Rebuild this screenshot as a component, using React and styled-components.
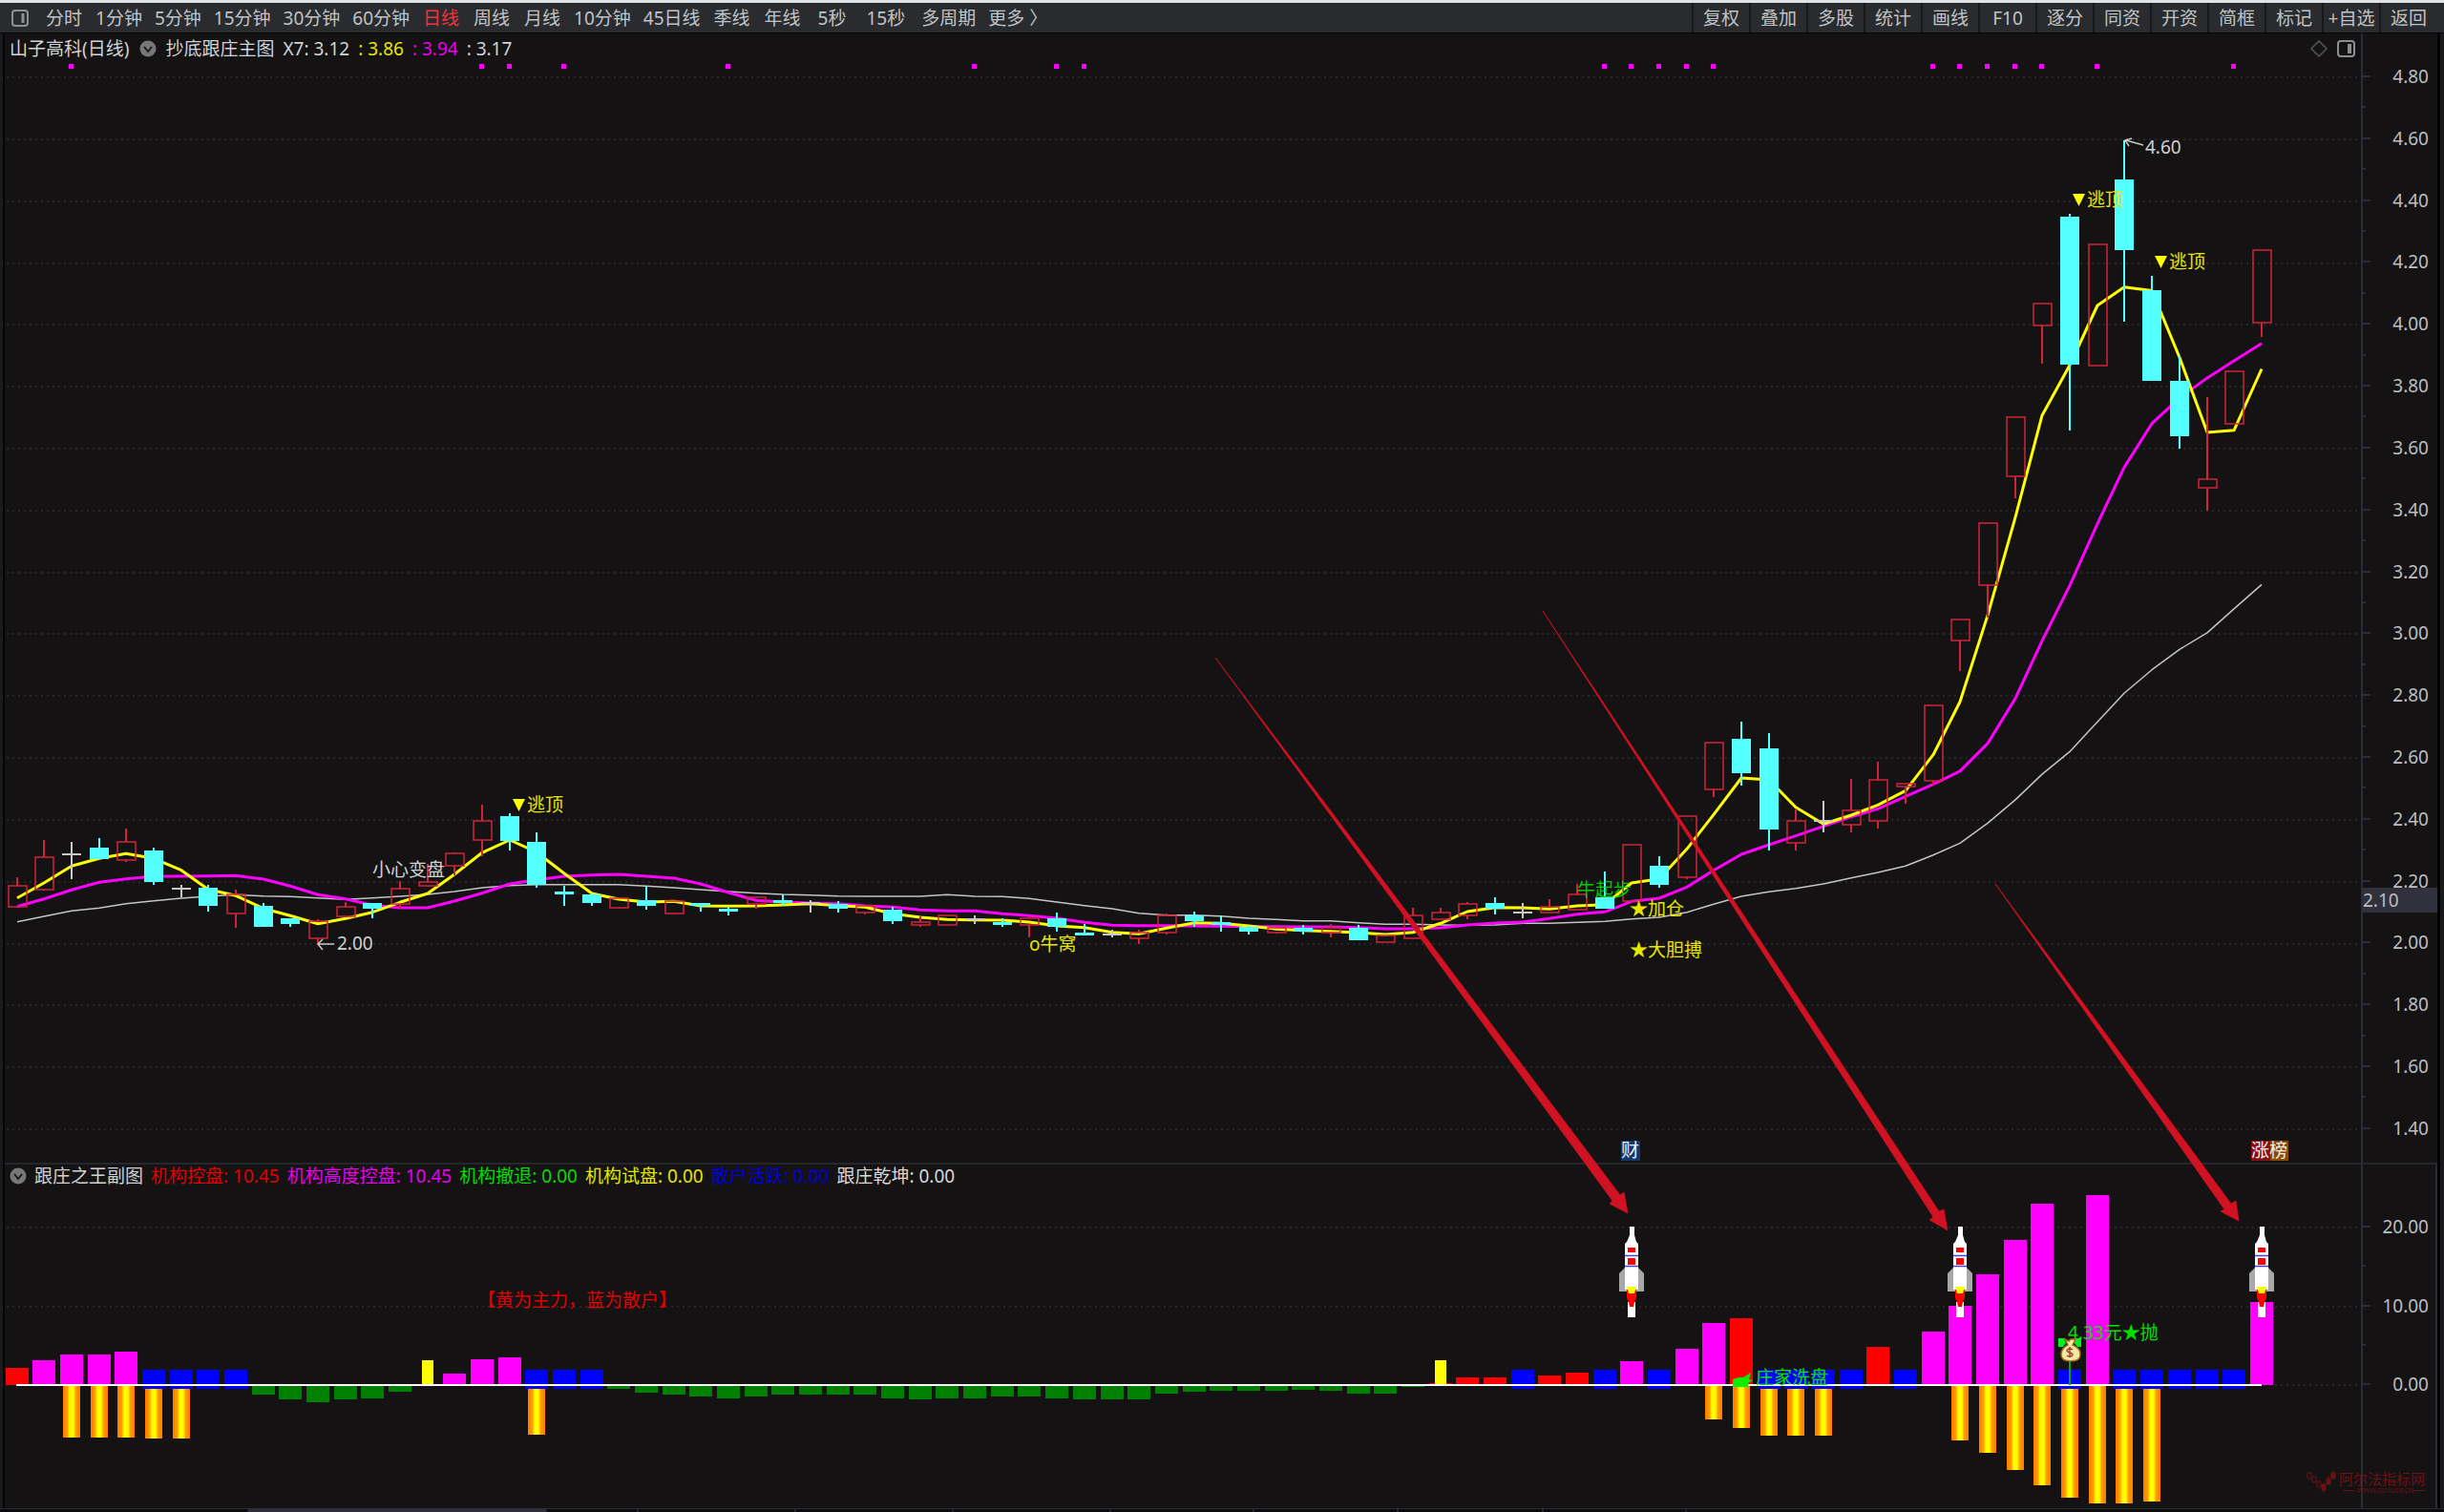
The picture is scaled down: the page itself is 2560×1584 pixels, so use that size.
import React from "react";
import styled, { createGlobalStyle } from "styled-components";

const GlobalStyle = createGlobalStyle`
  *, *::before, *::after { box-sizing: border-box; }
  body {
    margin: 0;
    background: #141213;
    font-family: "Noto Sans", "Noto Sans CJK SC", sans-serif;
    font-size: 19px;
    line-height: 24px;
    color: #c4c6c8;
  }
  button { font: inherit; color: inherit; background: none; border: 0; padding: 0; }
`;

const Shell = styled.div`
  display: flex;
  flex-direction: column;
`;

const TopBar = styled.header`
  display: flex;
  justify-content: space-between;
  height: 35px;
  padding-right: 8px;
  border-top: 3px solid #dfe5e5;
  border-bottom: 1px solid #050505;
  background: #292b2e;
`;

const Periods = styled.nav`
  display: flex;
  align-items: center;
  gap: 13px;
  padding-left: 12px;
`;

const periodPadding = { short: "0 1px", seconds: "0 4px", regular: "0" };

const PeriodButton = styled.button`
  padding: ${(p) => periodPadding[p.$kind]};
  color: ${(p) => (p.$active ? "#f0343a" : "#c0c3c5")};
  white-space: nowrap;
`;

const IconButton = styled.button`
  display: inline-flex;
  align-items: center;
  justify-content: center;
  margin: ${(p) => p.$margin || "0"};
`;

const Tools = styled.div`
  display: flex;
`;

const ToolButton = styled.button`
  width: 60px;
  border-left: 2px solid #17181a;
  color: #c0c3c5;
  text-align: center;
  white-space: nowrap;
`;

const Body = styled.main`
  display: grid;
  grid-template-columns: 5px 1fr 7px;
`;

const LeftRail = styled.div`
  background: #1a1b1e;
  border-right: 2px solid #060606;
`;

const RightRail = styled.div`
  background: #18191c;
  border-left: 3px solid #000;
`;

const Charts = styled.div`
  position: relative;
`;

const Panel = styled.section`
  display: grid;
  grid-template-columns: 1fr 80px;
  border-top: ${(p) => (p.$divided ? "2px solid #25272d" : "0")};
`;

const Plot = styled.div`
  min-width: 0;
`;

const InfoRow = styled.div`
  display: flex;
  align-items: center;
  justify-content: space-between;
  height: ${(p) => (p.$tall ? "32px" : "24px")};
  padding-right: 6px;
`;

const InfoItems = styled.div`
  display: flex;
  align-items: center;
  gap: ${(p) => p.$gap};
  padding-left: 5px;
`;

const InfoText = styled.span`
  color: ${(p) => p.$color || "#d0d2d4"};
  white-space: nowrap;
`;

const Drawing = styled.svg`
  display: block;
  width: 100%;
  height: auto;
  font-family: "Noto Sans", "Noto Sans CJK SC", sans-serif;
  font-size: 19px;
`;

const Overlay = styled(Drawing)`
  position: absolute;
  inset: 0;
  pointer-events: none;
`;

const Axis = styled.ol`
  position: relative;
  display: flex;
  flex-direction: column;
  justify-content: space-between;
  margin: 0;
  padding: ${(p) => p.$padding};
  list-style: none;
  border: solid #2a2d38;
  border-width: ${(p) => (p.$boxed ? "0 2px 0 2px" : "0 0 0 2px")};
  color: #bcbec0;
`;

const Tick = styled.li`
  display: flex;
  align-items: center;
  justify-content: space-between;
  height: ${(p) => (p.$minor ? "2px" : "24px")};
  padding-right: ${(p) => (p.$boxed ? "7px" : "9px")};
  &::before {
    content: "";
    width: ${(p) => (p.$minor ? "3px" : "8px")};
    height: 2px;
    background: #2a2d38;
  }
`;

const PriceTag = styled.li`
  position: absolute;
  left: 0;
  right: 0;
  height: 26px;
  line-height: 26px;
  transform: translateY(-100%);
  background: #30313c;
`;

const TabStrip = styled.footer`
  display: flex;
  height: 4px;
  padding-left: 5px;
  overflow: hidden;
  border-top: 1px solid #2a2d36;
  background: #0d0a0c;
`;

const Tab = styled.div`
  width: ${(p) => p.$width}px;
  flex: none;
  border-right: 2px solid #24262d;
  background: ${(p) => (p.$active ? "#2c2e38" : "transparent")};
`;

const X0 = 17.5;
const STEP = 28.675;
const x = (i) => Math.round(X0 + i * STEP);
const priceY = (p) => 145.9 + (4.6 - p) * 324.1;

// Each batch of readings has its own origin and scale: [y0, k] gives y = y0 + value / k.
const A = [800, 3];
const B = [880, 3];
const C = [700, 3];
const D = [120, 2.24];
const toY = ([y0, k], v) => y0 + v / k;

// R rising, C falling, D unchanged: [kind, high, body top, body bottom, low]
const candleGroups = [
  [A, [
    ["R", 358, 383, 451, 451], ["R", 240, 293, 395, 400], ["D", 245, 285, 285, 362], ["C", 235, 264, 299, 299],
    ["R", 203, 246, 304, 310], ["C", 263, 273, 371, 380], ["D", 381, 394, 394, 421], ["C", 382, 391, 447, 466],
    ["R", 396, 412, 470, 515], ["C", 439, 448, 514, 514], ["C", 486, 486, 504, 514], ["R", 490, 496, 550, 566],
    ["R", 434, 450, 480, 480], ["C", 438, 438, 457, 486], ["R", 368, 392, 441, 455], ["R", 316, 373, 384, 388],
    ["R", 278, 283, 322, 350], ["R", 130, 180, 239, 292], ["C", 155, 164, 244, 272], ["C", 215, 245, 380, 391],
    ["C", 384, 401, 408, 448], ["C", 408, 410, 437, 447], ["R", 422, 422, 452, 457], ["C", 384, 430, 446, 458],
    ["R", 431, 431, 470, 475], ["C", 438, 439, 447, 466], ["C", 450, 457, 466, 476], ["R", 416, 420, 441, 455],
    ["C", 410, 430, 436, 447], ["D", 430, 437, 437, 467],
  ]],
  [B, [
    ["C", 193, 200, 216, 227], ["R", 207, 207, 229, 233], ["C", 211, 218, 255, 263], ["R", 240, 257, 268, 272],
    ["R", 238, 238, 268, 268], ["D", 237, 250, 250, 263], ["C", 245, 257, 263, 273], ["R", 240, 246, 266, 306],
    ["C", 228, 246, 273, 287], ["C", 263, 290, 297, 297], ["D", 283, 298, 298, 305], ["R", 282, 291, 310, 326],
    ["R", 232, 238, 291, 296], ["C", 226, 236, 254, 272], ["C", 237, 258, 264, 287], ["C", 271, 274, 289, 297],
    ["R", 275, 275, 291, 295], ["C", 268, 276, 289, 297], ["R", 264, 276, 291, 305], ["C", 266, 276, 316, 316],
    ["R", 300, 300, 320, 320], ["R", 213, 238, 310, 310], ["R", 213, 229, 248, 248], ["R", 196, 200, 238, 250],
    ["C", 180, 198, 215, 234], ["D", 199, 229, 229, 246], ["R", 185, 210, 229, 229], ["R", 138, 172, 220, 220],
    ["C", 100, 180, 216, 216],
  ]],
  [C, [
    ["R", 556, 556, 732, 732], ["C", 592, 621, 682, 690], ["R", 466, 466, 656, 662], ["R", 235, 235, 382, 406],
    ["C", 167, 223, 331, 369], ["C", 205, 251, 507, 572], ["R", 440, 481, 548, 572], ["D", 417, 481, 481, 515],
    ["R", 347, 447, 491, 515], ["R", 294, 352, 481, 505], ["R", 362, 362, 373, 425], ["R", 116, 116, 353, 370],
  ]],
  [D, [
    ["R", 1185, 1185, 1234, 1305], ["R", 958, 958, 1105, 1180], ["R", 711, 711, 850, 900], ["R", 443, 443, 496, 585],
    ["C", 233, 240, 586, 741], ["R", 305, 305, 588, 588], ["C", 60, 152, 317, 487], ["C", 378, 413, 625, 625],
    ["C", 567, 626, 755, 783], ["R", 664, 856, 875, 929], ["R", 602, 602, 726, 726], ["R", 319, 319, 489, 522],
  ]],
];
const candles = candleGroups.flatMap(([o, rows]) =>
  rows.map(([kind, ...v]) => [kind, ...v.map((n) => Math.round(toY(o, n)))])
);

const flatten = (groups) => groups.flatMap(([o, vs]) => vs.map((v) => toY(o, v)));
const fast = flatten([
  [A, [422, 375, 322, 298, 283, 298, 335, 395, 415, 455, 478, 503, 487, 467, 436, 408, 348, 280, 240, 278, 345, 408, 426, 435, 433, 447, 448, 447, 444, 440]],
  [B, [206, 211, 232, 243, 250, 251, 252, 258, 270, 275, 290, 295, 277, 260, 262, 270, 280, 284, 287, 291, 297, 290, 262, 225, 212, 213, 217, 207, 203]],
  [C, [675, 662, 568, 460, 345, 351, 437, 490, 462, 430, 385, 272]],
  [D, [1378, 1175, 945, 706, 588, 448, 405, 413, 570, 746, 741, 597]],
]);
const mid = flatten([
  [A, [449, 425, 397, 373, 362, 354, 354, 353, 352, 363, 385, 412, 425, 445, 453, 453, 432, 407, 378, 365, 354, 350, 348, 354, 360, 378, 405, 430, 435, 438]],
  [B, [200, 207, 211, 220, 223, 223, 232, 238, 246, 259, 268, 269, 269, 270, 271, 272, 272, 273, 273, 275, 279, 279, 276, 267, 261, 258, 247, 233, 226]],
  [C, [733, 723, 688, 635, 585, 555, 527, 497, 467, 442, 403, 365]],
  [D, [1541, 1476, 1370, 1235, 1105, 960, 828, 725, 665, 618, 578, 537]],
]);
const slow = flatten([
  [A, [497, 480, 463, 454, 440, 431, 423, 417, 412, 416, 418, 422, 427, 422, 417, 411, 402, 390, 383, 380, 380, 380, 380, 385, 390, 396, 402, 407, 411, 413]],
  [B, [176, 177, 177, 177, 172, 177, 178, 184, 195, 206, 216, 230, 236, 236, 239, 246, 250, 254, 254, 260, 265, 265, 267, 268, 267, 262, 262, 259, 256]],
  [C, [788, 783, 767, 742, 717, 703, 692, 678, 659, 642, 622, 587]],
  [D, [1710, 1663, 1608, 1548, 1495, 1425, 1358, 1303, 1255, 1216, 1160, 1103]],
]);
const pts = (ys) => ys.map((y, i) => `${x(i)},${y.toFixed(1)}`).join(" ");

const signalDots = [2, 17, 18, 20, 26, 35, 38, 39, 58, 59, 60, 61, 62, 70, 71, 72, 73, 74, 76, 81];

const RED = "#ff0000";
const PINK = "#ff00ff";
const BLUE = "#0000ff";
const GREEN = "#008000";
const ZERO = 1451;

// [index, colour, height above the zero line]
const upBars = [
  [0, RED, 18], [1, PINK, 26], [2, PINK, 32], [3, PINK, 32], [4, PINK, 35],
  [16, PINK, 12], [17, PINK, 27], [18, PINK, 29], [52, RED, 2], [53, RED, 8], [54, RED, 8], [56, RED, 10],
  [57, RED, 13], [59, PINK, 25], [61, PINK, 38], [62, PINK, 65], [63, RED, 70], [68, RED, 40],
  [70, PINK, 56], [71, PINK, 83], [72, PINK, 116], [73, PINK, 152], [74, PINK, 190], [76, PINK, 199], [82, PINK, 87],
];
const blueBars = [5, 6, 7, 8, 19, 20, 21, 55, 58, 60, 64, 65, 66, 67, 69, 75, 77, 78, 79, 80, 81];
const greenStart = 22;
const greenDepths = [4, 8, 10, 12, 14, 12, 10, 10, 10, 10, 14, 15, 14, 14, 12, 12, 14, 15, 15, 15, 9, 7, 6, 6, 6, 5, 6, 9, 9, 2];
const greenBars = [[9, 10], [10, 15], [11, 18], [12, 15], [13, 14], [14, 7], ...greenDepths.map((d, k) => [greenStart + k, d])];
const goldBars = [
  [2, 1506], [3, 1506], [4, 1506], [5, 1507], [6, 1507], [19, 1503], [62, 1487], [63, 1496], [64, 1504], [65, 1504],
  [66, 1504], [71, 1509], [72, 1522], [73, 1540], [74, 1556], [75, 1569], [76, 1575], [77, 1575], [78, 1573],
];

const Candle = ({ i, data: [kind, hi, top, bottom, lo] }) => {
  const cx = x(i);
  if (kind === "D")
    return <path d={`M${cx} ${hi}V${lo}M${cx - 10} ${top}H${cx + 10}`} stroke="#c8c8c8" strokeWidth="2" />;
  const color = kind === "R" ? "#d0243c" : "#54ffff";
  return (
    <g>
      <path d={`M${cx} ${hi}V${top}M${cx} ${bottom}V${lo}`} stroke={color} strokeWidth="2" />
      {kind === "R" ? (
        <rect x={cx - 9} y={top} width="19" height={Math.max(bottom - top, 3)} fill="none" stroke={color} strokeWidth="1.5" />
      ) : (
        <rect x={cx - 10} y={top} width="20" height={Math.max(bottom - top, 3)} fill={color} />
      )}
    </g>
  );
};

const GridLines = ({ ys }) => (
  <g stroke="#2c2d34" strokeWidth="1.5" strokeDasharray="2 4">
    {ys.map((y) => <path key={y} d={`M7 ${Math.round(y)}H2472`} />)}
  </g>
);

const Escape = ({ tx, y }) => (
  <g fill="#ffff00">
    <path d={`M${tx} ${y - 6}h13l-6.5 13z`} />
    <text x={tx + 15} y={y + 7} fill="#e6e600">逃顶</text>
  </g>
);

const Rocket = ({ cx }) => (
  <g transform={`translate(${cx} 1285)`}>
    <path d="M-7 43L-13 49V68H13V49L7 43Z" fill="#a8a8aa" />
    <path d="M-2 0H3V9L5 16L7 18V66H-7V18L-5 16L-2 9Z" fill="#fff" />
    <rect x="-4" y="79" width="8" height="16" fill="#fff" />
    <path d="M-4 22H4V27H-4ZM-4 33H4V40H-4Z" fill="#f00" />
    <path d="M-7 30.5H7M-7 41.5H7" stroke="#4040f0" strokeWidth="1.5" />
    <path d="M-5 66H5V75L3 79L2 84H-2L-3 79L-5 75Z" fill="#f00" />
    <path d="M-5 63H5L3 70H-3Z" fill="#ff0" />
  </g>
);

const MoneyBag = ({ cx }) => (
  <g>
    <path d={`M${cx} 1426V1451`} stroke="#00a030" strokeWidth="2" />
    <path d={`M${cx - 12} 1402h6l2 5-3 4h-5zM${cx + 12} 1402h-5l-3 4 4 5h4z`} fill="#00f020" />
    <path
      d={`M${cx - 5} 1403l4 2 2-2 5 0-3 6c5 2 8 6 8 10c0 5-4 7-10 7s-10-2-10-7c0-4 3-8 7-10z`}
      fill="#f5e9a0" stroke="#a06a20" strokeWidth="1.5"
    />
    <path d={`M${cx + 3} 1414c-2-2-6-1-6 1s6 2 6 4-4 3-6 1M${cx} 1411v11`} fill="none" stroke="#9a4030" strokeWidth="1.5" />
  </g>
);

const periods = ["分时", "1分钟", "5分钟", "15分钟", "30分钟", "60分钟", "日线", "周线", "月线", "10分钟", "45日线", "季线", "年线", "5秒", "15秒", "多周期", "更多 〉"];
const periodKind = (p) => (p.endsWith("秒") ? "seconds" : p.length === 2 ? "short" : "regular");
const tools = ["复权", "叠加", "多股", "统计", "画线", "F10", "逐分", "同资", "开资", "简框", "标记", "+自选", "返回"];
const priceTicks = Array.from({ length: 18 }, (_, k) => (4.8 - k * 0.2).toFixed(2));
const volumeTicks = ["20.00", "10.00", "0.00"];
const subInfo = [
  ["机构控盘: 10.45", "#e00000"], ["机构高度控盘: 10.45", "#e800e8"], ["机构撤退: 0.00", "#00dc00"],
  ["机构试盘: 0.00", "#e6e600"], ["散户活跃: 0.00", "#0000d8"], ["跟庄乾坤: 0.00", "#d8d8d8"],
];

const Toggle = ({ label, margin }) => (
  <IconButton aria-label={label} $margin={margin}>
    <svg width="18" height="18" viewBox="0 0 18 18">
      <circle cx="9" cy="9" r="8.5" fill="#77777a" />
      <path d="M5 7l4 5 4-5" fill="none" stroke="#1a1a1a" strokeWidth="2" />
    </svg>
  </IconButton>
);

const Ticks = ({ labels, boxed }) =>
  labels.map((label, k) => (
    <React.Fragment key={label}>
      {k > 0 && <Tick $minor aria-hidden="true" />}
      <Tick $boxed={boxed}>{label}</Tick>
    </React.Fragment>
  ));

export default function App() {
  const tagTop = ((priceY(2.1) - 35) / 1183) * 100;
  return (
    <Shell>
      <GlobalStyle />
      <TopBar>
        <Periods>
          <IconButton aria-label="侧栏" $margin="0 4px 0 0">
            <svg width="18" height="20" viewBox="0 0 18 20" fill="none" stroke="#8d9092" strokeWidth="2">
              <rect x="1" y="2" width="16" height="16" rx="3" />
              <path d="M12 5v10" strokeWidth="3" />
            </svg>
          </IconButton>
          {periods.map((p) => (
            <PeriodButton key={p} $active={p === "日线"} $kind={periodKind(p)}>{p}</PeriodButton>
          ))}
        </Periods>
        <Tools>
          {tools.map((t) => <ToolButton key={t}>{t}</ToolButton>)}
        </Tools>
      </TopBar>

      <Body>
        <LeftRail />
        <Charts>
          <Panel>
            <Plot>
              <InfoRow $tall>
                <InfoItems $gap="9px">
                  <InfoText>山子高科(日线)</InfoText>
                  <Toggle label="主图指标" margin="0 0 0 2px" />
                  <InfoText>抄底跟庄主图</InfoText>
                  <InfoText>X7: 3.12</InfoText>
                  <InfoText $color="#e6e600">: 3.86</InfoText>
                  <InfoText $color="#e800e8">: 3.94</InfoText>
                  <InfoText>: 3.17</InfoText>
                </InfoItems>
                <IconButton aria-label="面板">
                  <svg width="48" height="22" viewBox="0 0 48 22" fill="none">
                    <path d="M10 3l8 8-8 8-8-8z" stroke="#55575a" strokeWidth="1.5" />
                    <rect x="30" y="3" width="17" height="16" rx="3" stroke="#8b8d90" strokeWidth="2" />
                    <path d="M42 6v10" stroke="#8b8d90" strokeWidth="4" />
                  </svg>
                </IconButton>
              </InfoRow>
              <Drawing viewBox="5 67 2468 1151" role="img" aria-label="日线图">
                <GridLines ys={priceTicks.map((p) => priceY(Number(p)))} />
                {signalDots.map((i) => <rect key={i} x={x(i) - 3} y="67" width="5" height="5" fill={PINK} />)}
                <g fill="none" strokeLinejoin="round">
                  <polyline points={pts(slow)} stroke="#c4c4c4" strokeWidth="1.5" />
                  <polyline points={pts(mid)} stroke={PINK} strokeWidth="3" />
                  <polyline points={pts(fast)} stroke="#ffff00" strokeWidth="3" />
                </g>
                {candles.map((c, i) => <Candle key={i} i={i} data={c} />)}
                <Escape tx={537} y={843} />
                <Escape tx={2171} y={209} />
                <Escape tx={2257} y={274} />
                <g fill="none" stroke="#c8c8c8" strokeWidth="1.5">
                  <path d="M350 989H333M338 984l-5 5 5 6" />
                  <path d="M2245 152L2227 147M2233 145l-7 2 4 6" />
                </g>
                <g fill="#d0d2d4">
                  <text x="390" y="918">小心变盘</text>
                  <text x="353" y="995">2.00</text>
                  <text x="2247" y="161">4.60</text>
                </g>
                <g fill="#e6e600">
                  <text x="1078" y="996">o牛窝</text>
                  <text x="1707" y="959">★加仓</text>
                  <text x="1707" y="1002">★大胆搏</text>
                </g>
                <text x="1652" y="939" fill="#00c800">牛起步</text>
                <rect x="1698" y="1195" width="20" height="21" fill="#12386e" />
                <rect x="2358" y="1195" width="20" height="21" fill="#8a0d12" />
                <rect x="2378" y="1195" width="19" height="21" fill="#8c4a00" />
                <g fill="#eef0f0">
                  <text x="1698" y="1212">财</text>
                  <text x="2358" y="1212">涨榜</text>
                </g>
              </Drawing>
            </Plot>
            <Axis $padding="33px 0 24px">
              <Ticks labels={priceTicks} />
              <PriceTag style={{ top: `${tagTop}%` }}>2.10</PriceTag>
            </Axis>
          </Panel>

          <Panel $divided>
            <Plot>
              <InfoRow>
                <InfoItems $gap="8px">
                  <Toggle label="副图指标" />
                  <InfoText>跟庄之王副图</InfoText>
                  {subInfo.map(([t, c]) => <InfoText key={t} $color={c}>{t}</InfoText>)}
                </InfoItems>
              </InfoRow>
              <Drawing viewBox="5 1244 2468 336" role="img" aria-label="副图">
                <defs>
                  <linearGradient id="gold">
                    <stop offset="0" stopColor="#ff7a00" />
                    <stop offset="0.25" stopColor="#ff9c00" />
                    <stop offset="0.4" stopColor="#ffff00" />
                    <stop offset="0.6" stopColor="#ffff00" />
                    <stop offset="0.75" stopColor="#ff9c00" />
                    <stop offset="1" stopColor="#ff7a00" />
                  </linearGradient>
                </defs>
                <GridLines ys={[1286, 1369, 1451]} />
                {upBars.map(([i, c, h]) => <rect key={i} x={x(i) - 12} y={ZERO - h} width="24" height={h} fill={c} />)}
                {greenBars.map(([i, h]) => <rect key={i} x={x(i) - 12} y={ZERO} width="24" height={h} fill={GREEN} />)}
                {goldBars.map(([i, b]) => <rect key={i} x={x(i) - 9} y={ZERO} width="18" height={b - ZERO} fill="url(#gold)" />)}
                {blueBars.map((i) => <rect key={i} x={x(i) - 12} y="1435" width="24" height="20" fill={BLUE} />)}
                {[15, 52].map((i) => <rect key={i} x={x(i) - 6} y="1425" width="12" height="26" fill="#ffff00" />)}
                <path d="M17 1451H2369" stroke="#fff" strokeWidth="2" />
                <path d="M1815 1445l6-2h5l8-5-2 7 4 1-5 3v4h-16z" fill="#00f000" />
                <text x="1839" y="1450" fill="#00e000">庄家洗盘</text>
                <text x="2166" y="1403" fill="#00e000">4.33元★抛</text>
                <MoneyBag cx={x(75)} />
                {[59, 71, 82].map((i) => <Rocket key={i} cx={x(i)} />)}
                <text x="500" y="1369" fill="#e00000">【黄为主力，蓝为散户】</text>
              </Drawing>
            </Plot>
            <Axis $boxed $padding="53px 0 118px">
              <Ticks labels={volumeTicks} boxed />
            </Axis>
          </Panel>

          <Overlay viewBox="5 35 2548 1545" aria-hidden="true">
            <g fill="#d01222" stroke="#d01222" strokeWidth="0.75" strokeLinejoin="round">
              <path d="M1273 689L1697 1252L1701 1249L1705 1271L1686 1261L1689 1258Z" />
              <path d="M1616 640L2031 1269L2036 1267L2040 1289L2021 1278L2025 1275Z" />
              <path d="M2090 926L2337 1261L2342 1258L2345 1279L2326 1269L2330 1267Z" />
            </g>
            <g fill="#6c1217" stroke="none">
              <text x="2450" y="1555" fontSize="15">阿尔法指标网</text>
              <text x="2469" y="1564" fontSize="7">WWW.GUXUE8.CN</text>
            </g>
            <g stroke="#6c1217" fill="none">
              <path d="M2454 1561.5h12M2528 1561.5h12" />
              <path d="M2417 1543h4v6h-4zM2422 1547h4v6h-4zM2427 1552h4v6h-4z" />
              <path d="M2432 1555h4v6h-4zM2437 1549h4v6h-4zM2442 1543h4v6h-4zM2434 1560v4M2439 1546v3M2444 1541v2" fill="#6c1217" />
            </g>
          </Overlay>
        </Charts>
        <RightRail />
      </Body>

      <TabStrip>
        <Tab $width={256} />
        <Tab $width={312} $active>
          <svg width="312" height="3" viewBox="0 0 312 3" aria-hidden="true">
            <path d="M115 2h16M168 2h17M194 2h4M206 2h9M218 2h3M224 2h3M231 2h12" stroke="#b4b6b8" strokeWidth="2" />
          </svg>
        </Tab>
        <Tab $width={96} />
        <Tab $width={165} />
        <Tab $width={165} />
        <Tab $width={165} />
        <Tab $width={150} />
        <Tab $width={151} />
        <Tab $width={152} />
        <Tab $width={150} />
      </TabStrip>
    </Shell>
  );
}
